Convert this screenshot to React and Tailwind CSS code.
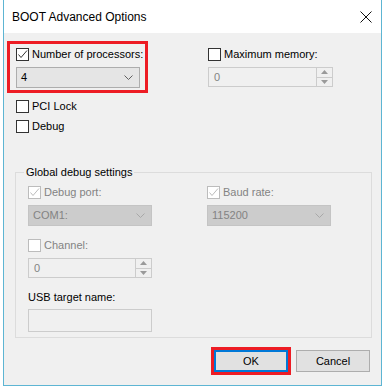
const font = { fontFamily: '"Liberation Sans", Arial, sans-serif' };

const Check = ({ checked, disabled, label }) => (
  <div className="flex items-center h-[13px] gap-[3px]">
    <div
      className={`w-[13px] h-[13px] border bg-white flex items-center justify-center ${
        disabled ? "border-[#bcbcbc]" : "border-[#333333]"
      }`}
    >
      {checked && (
        <svg width="11" height="11" viewBox="0 0 11 11">
          <polyline
            points="1.5,5.5 4,8.5 10,1.5"
            fill="none"
            stroke={disabled ? "#bcbcbc" : "#333333"}
            strokeWidth="1"
          />
        </svg>
      )}
    </div>
    <span className={`text-[11px] leading-none ${disabled ? "text-[#838383]" : "text-black"}`}>{label}</span>
  </div>
);

const Chevron = ({ color }) => (
  <svg width="9" height="5" viewBox="0 0 9 5">
    <polyline points="0.5,0.5 4.5,4.5 8.5,0.5" fill="none" stroke={color} strokeWidth="1" />
  </svg>
);

const Select = ({ value, disabled }) => (
  <div
    className={`w-[124px] h-[21px] border flex items-center justify-between pl-[4px] pr-[6px] text-[11px] ${
      disabled ? "bg-[#cccccc] border-[#c4c4c4] text-[#838383]" : "bg-[#e5e5e5] border-[#adadad] text-black"
    }`}
  >
    <span>{value}</span>
    <Chevron color={disabled ? "#a8a8a8" : "#606060"} />
  </div>
);

const Spinner = ({ value, width }) => (
  <div className={`${width} h-[20px] border border-[#cccccc] bg-[#f0f0f0] flex text-[11px] text-[#838383]`}>
    <div className="flex-1 flex items-center pl-[5px]">{value}</div>
    <div className="w-[16px] flex flex-col border-l border-[#cccccc]">
      <div className="flex-1 flex items-center justify-center border-b border-[#cccccc] bg-[#f0f0f0]">
        <svg width="7" height="4" viewBox="0 0 7 4"><polygon points="0,4 3.5,0 7,4" fill="#9a9a9a" /></svg>
      </div>
      <div className="flex-1 flex items-center justify-center bg-[#f0f0f0]">
        <svg width="7" height="4" viewBox="0 0 7 4"><polygon points="0,0 3.5,4 7,0" fill="#9a9a9a" /></svg>
      </div>
    </div>
  </div>
);

export default function App() {
  return (
    <div className="w-[385px] h-[389px] bg-white" style={font}>
      <div className="ml-[3px] w-[379px] h-[386px] border-x border-b border-[#5db5d3] flex flex-col">
        <div className="h-[33px] bg-white flex items-center justify-between pl-[8px] pr-[9px]">
          <span className="text-[12px] text-black">BOOT Advanced Options</span>
          <svg width="12" height="12" viewBox="0 0 12 12">
            <path d="M0.5,0.5 L11.5,11.5 M11.5,0.5 L0.5,11.5" stroke="#111" strokeWidth="1" />
          </svg>
        </div>
        <div className="flex-1 bg-[#f0f0f0] flex flex-col pl-[3px] pt-[8px]">
          <div className="flex">
            <div className="w-[141px] border-[3px] border-[#ed1c24] pt-[4px] pl-[6px] pb-[2px] flex flex-col gap-[6px]">
              <Check checked label="Number of processors:" />
              <Select value="4" />
            </div>
            <div className="ml-[60px] pt-[7px] flex flex-col gap-[6px]">
              <Check label="Maximum memory:" />
              <Spinner value="0" width="w-[125px]" />
            </div>
          </div>
          <div className="ml-[9px] mt-[7px] flex flex-col gap-[7px]">
            <Check label="PCI Lock" />
            <Check label="Debug" />
          </div>
          <fieldset className="ml-[8px] mt-[32px] w-[357px] border border-[#dcdcdc] pl-[12px] pb-[5px]">
            <legend className="ml-[-4px] px-[2px] text-[11px] text-black leading-[15px]">Global debug settings</legend>
            <div className="mt-[6px] flex gap-[55px]">
              <div className="flex flex-col gap-[6px]">
                <Check checked disabled label="Debug port:" />
                <Select value="COM1:" disabled />
              </div>
              <div className="flex flex-col gap-[6px]">
                <Check checked disabled label="Baud rate:" />
                <Select value="115200" disabled />
              </div>
            </div>
            <div className="mt-[13px] flex flex-col gap-[6px]">
              <Check disabled label="Channel:" />
              <Spinner value="0" width="w-[124px]" />
            </div>
            <div className="mt-[14px] text-[11px] text-black leading-none">USB target name:</div>
            <div className="mt-[6px] w-[124px] h-[23px] border border-[#cccccc] bg-[#f0f0f0]" />
          </fieldset>
          <div className="mt-[9px] flex justify-end pr-[11px] gap-[5px] text-[11px]">
            <div className="w-[80px] h-[28px] border-[3px] border-[#ed1c24]">
              <div className="w-full h-full border-2 border-[#0078d7] bg-[#e1e1e1] flex items-center justify-center">OK</div>
            </div>
            <div className="mt-[3px] w-[74px] h-[22px] border border-[#adadad] bg-[#e1e1e1] flex items-center justify-center">
              Cancel
            </div>
          </div>
        </div>
      </div>
    </div>
  );
}
